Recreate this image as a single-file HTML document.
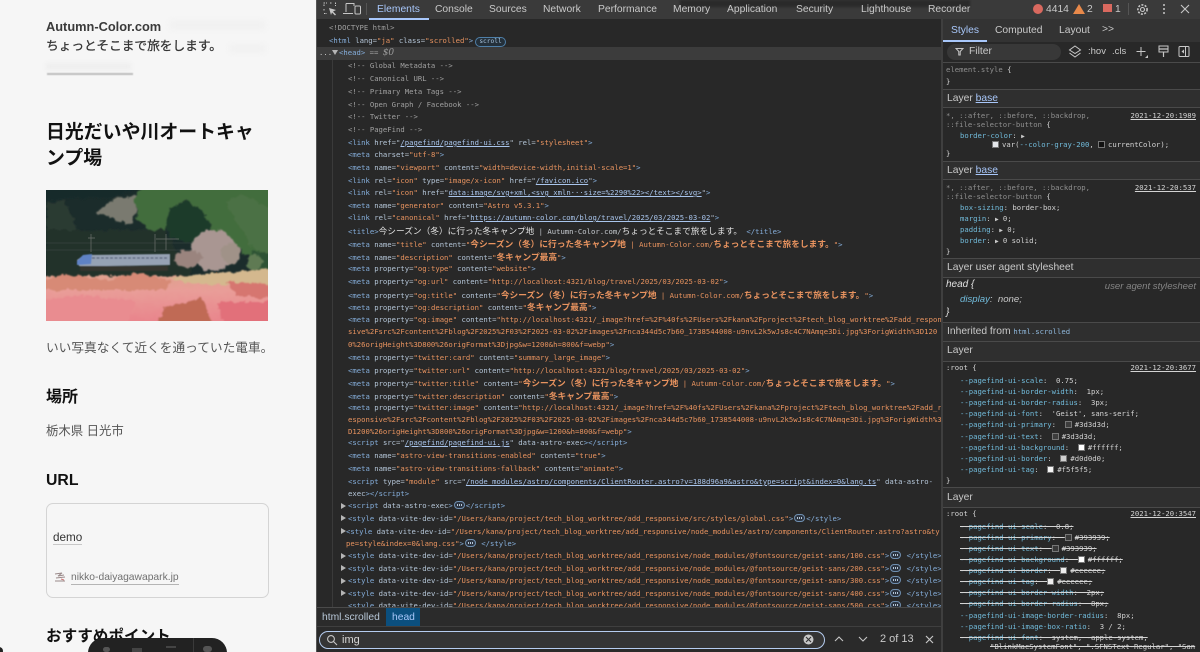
<!DOCTYPE html>
<html lang="ja"><head><meta charset="utf-8"><title>DevTools</title>
<style>
*{box-sizing:border-box}
html,body{margin:0;padding:0;width:1200px;height:652px;overflow:hidden;background:#282828}
body{position:relative;font-family:"Liberation Sans","Noto Sans CJK JP",sans-serif}
.abs,.l,.s,.x{position:absolute;white-space:pre}
#left{position:absolute;left:0;top:0;width:316px;height:652px;background:#f6f6f6;overflow:hidden}
.h{font-weight:700;color:#111}
.l{font:7.25px/12px "DejaVu Sans Mono","Noto Sans CJK JP",monospace;color:#b0bac6;height:12px}
.t{color:#85aedb}.n{color:#b5c6d8}.v{color:#e8935f}.b{color:#c6cacf}.m{color:#a0a0a0}
.u{color:#a9c5ec;text-decoration:underline}
.c{font:bold 8.7px/12px "Noto Sans CJK JP",sans-serif;letter-spacing:0}
.w{font-weight:400;color:#e0e0e0}
.s{font:7.25px/11px "DejaVu Sans Mono","Noto Sans CJK JP",monospace;color:#d4d4d4;height:11px}
.p{color:#72bcdc}.g{color:#909090}
.st{text-decoration:line-through}
.lb{position:absolute;left:943px;width:257px;background:#2f2f2f}
.d{position:absolute;left:943px;width:257px;height:1px;background:#4a4a4a}
.x{font:10.3px/14px "Liberation Sans",sans-serif;color:#c9c9c9}
.sw{display:inline-block;width:7px;height:7px;border:1px solid #777;vertical-align:-1px;margin-right:3px}
.ar{font-size:6px;color:#ccc}
.dot{display:inline-block;width:11px;height:8px;border:1px solid #6f8fb0;border-radius:5px;vertical-align:-1px;background:#2c3440;position:relative;margin:0 1px}
.dot:after{content:"";position:absolute;left:2px;top:2px;width:5px;height:2px;background:repeating-linear-gradient(90deg,#b5c6d8 0 1px,transparent 1px 2px)}
</style></head><body>

<div id="left">
<div class="abs" style="left:170px;top:21px;width:95px;height:8px;background:#f0f0f0;filter:blur(3px)"></div>
<div class="abs" style="left:230px;top:45px;width:35px;height:7px;background:#f0f0f0;filter:blur(3px)"></div>
<div class="abs" style="left:46px;top:63px;width:85px;height:7px;background:#eee;filter:blur(2px)"></div>
<div class="abs" style="left:47px;top:73px;width:86px;height:2px;background:#bdbdbd;filter:blur(.6px)"></div>
<div class="abs" style="left:46px;top:19px;font-size:12.8px;line-height:16px;font-weight:700;color:#3a3a3a">Autumn-Color.com</div>
<div class="abs" style="left:46px;top:37px;font-size:12.7px;line-height:18px;color:#333;-webkit-text-stroke:.25px #333">ちょっとそこまで旅をします。</div>
<div class="abs h" style="left:46px;top:120px;font-size:18.9px;line-height:25.5px">日光だいや川オートキャ<br>ンプ場</div>
<svg class="abs" style="left:46px;top:190px" width="222" height="131" viewBox="0 0 222 131">
<defs>
<filter id="r" x="-5%" y="-5%" width="110%" height="110%"><feTurbulence type="fractalNoise" baseFrequency=".16" numOctaves="3" seed="4" result="n"/><feDisplacementMap in="SourceGraphic" in2="n" scale="7" xChannelSelector="R" yChannelSelector="G"/><feGaussianBlur stdDeviation=".9"/></filter>
<filter id="b2"><feGaussianBlur stdDeviation=".6"/></filter>
<linearGradient id="gr" x1="0" y1="0" x2="0" y2="1"><stop offset="0" stop-color="#dfa08e"/><stop offset=".3" stop-color="#e99d98"/><stop offset="1" stop-color="#e9818a"/></linearGradient>
</defs>
<rect width="222" height="131" fill="#1b2c2b"/>
<g filter="url(#r)">
<path d="M-5-5H95L70 8 30 8-5 12Z" fill="#12292a"/>
<path d="M0 14 18 10 30 35 40 70 0 70Z" fill="#2c3a33"/>
<path d="M50 22 68 9 90 5 89 25 85 35 70 30Z" fill="#7a7a70"/>
<path d="M88 8 100-5H230V85L210 72 195 60 170 50 160 25 140 10 125 18 118 45 105 42 92 30Z" fill="#426d3e"/>
<path d="M124 18 142 10 160 25 168 48 150 55 125 48 120 35Z" fill="#1c3a2c"/>
<path d="M180 12 195 4 228 20 228 75 205 55Z" fill="#4b7144"/>
<path d="M0 40H120L130 62 150 70 140 98H0Z" fill="#20302b"/>
<path d="M205 62H228V88L205 92Z" fill="#2f5236"/>
</g>
<path d="M0 53 150 53M0 60H150" stroke="#4d5350" stroke-width=".4"/>
<path d="M45 44V62M42 48H49M109 44V62M120 44V60M110 49H133" stroke="#6d716d" stroke-width=".7"/>
<g filter="url(#r)"><ellipse cx="167" cy="60" rx="22" ry="21" fill="#a99692"/><ellipse cx="142" cy="69" rx="14" ry="9" fill="#9a847e"/><circle cx="185" cy="64" r="10" fill="#a09288"/><circle cx="208" cy="72" r="8" fill="#5e7a52"/></g>
<path d="M165 88 162 95M171 82 163 96" stroke="#43301f" stroke-width="1.2"/>
<g filter="url(#b2)">
<path d="M31 70 38 65 124 64 124 75 60 76 33 76Z" fill="#96a2b4"/>
<path d="M31 71 37 65 46 64 45 74 31 75Z" fill="#5e82c4"/>
<path d="M46 68H122" stroke="#59627a" stroke-width="1.2" stroke-dasharray="3 1.5"/>
<rect x="34" y="76" width="88" height="5" fill="#34342f"/>
</g>
<g filter="url(#r)">
<rect x="-6" y="86" width="234" height="50" fill="url(#gr)"/>
<path d="M120 88 228 78V96L150 94Z" fill="#d4b88e"/>
<path d="M-5 90 20 84 60 90 95 82 125 92 120 100-5 100Z" fill="#d78a76"/>
<path d="M180 92 228 94V108L190 106Z" fill="#d67670"/>
<path d="M118 118 155 108 168 136H110Z" fill="#c06a55"/>
<path d="M-5 110 40 105 90 112 80 136H-5Z" fill="#e98c90"/>
<path d="M170 112 228 112V136H178Z" fill="#e2707a"/>
</g>
</svg>
<div class="abs" style="left:46px;top:339px;font-size:12.7px;line-height:18px;color:#555">いい写真なくて近くを通っていた電車。</div>
<div class="abs h" style="left:46px;top:388px;font-size:16px;line-height:20px">場所</div>
<div class="abs" style="left:46px;top:422px;font-size:12.4px;line-height:18px;color:#555">栃木県 日光市</div>
<div class="abs h" style="left:46px;top:471px;font-size:15.8px;line-height:20px">URL</div>
<div class="abs" style="left:46px;top:503px;width:223px;height:95px;border:1px solid #d4d4d4;border-radius:7px"></div>
<div class="abs" style="left:53px;top:531px;font-size:11.7px;line-height:13px;color:#333;border-bottom:1px solid #c8c8c8">demo</div>
<svg class="abs" style="left:54px;top:572px" width="12" height="11" viewBox="0 0 12 11"><path d="M1 2 8 1 4 4 10 3M2 6 11 5M1 9H11" stroke="#9a8a8a" stroke-width="1" fill="none"/><path d="M7 7 10 8" stroke="#c77" stroke-width="1"/></svg>
<div class="abs" style="left:71px;top:572px;font-size:10.3px;line-height:12px;color:#707070;border-bottom:1px solid #b5b5b5">nikko-daiyagawapark.jp</div>
<div class="abs h" style="left:46px;top:627px;font-size:15.6px;line-height:20px">おすすめポイント</div>
<div class="abs" style="left:88px;top:638px;width:139px;height:30px;border-radius:15px;background:#222"></div>
<div class="abs" style="left:193px;top:638px;width:1px;height:14px;background:#3a3a3a"></div>
<div class="abs" style="left:103px;top:647px;width:7px;height:5px;border-radius:3px;background:#555"></div>
<div class="abs" style="left:132px;top:648px;width:10px;height:4px;background:#444"></div>
<div class="abs" style="left:166px;top:646px;width:10px;height:2px;background:#444"></div>
<div class="abs" style="left:203px;top:646px;width:9px;height:6px;border-radius:3px;background:#555"></div>
<div class="abs" style="left:-5px;top:647px;width:8px;height:8px;border-radius:50%;background:#222"></div>
</div>
<div class="abs" style="left:316px;top:0;width:1px;height:652px;background:#555"></div>

<!-- top toolbar -->
<div class="abs" style="left:317px;top:0;width:883px;height:19px;background:#3a3a3a"></div>
<div class="abs" style="left:680px;top:0;width:290px;height:7px;background:#2a2a2a;filter:blur(1px)"></div>
<svg class="abs" style="left:323px;top:2px" width="44" height="14" viewBox="0 0 44 14" fill="none" stroke="#c7c7c7"><path d="M1 4V1H4M7 1H9M12 1H12.5V4M1 7V9M1 11.5H4" stroke-dasharray="1.5 1"/><path d="M6 6 13 8 10 9.5 13 12.5 12 13.5 9 10.5 8 13Z" fill="#c7c7c7" stroke="none"/><path d="M23 1.5H31V4M23 1.5V10M20 11.5H30"/><rect x="32" y="4" width="5.5" height="8" rx="1"/></svg>
<div class="abs" style="left:366px;top:3px;width:1px;height:12px;background:#555"></div>
<div class="x" style="left:377px;top:3px;color:#a8c7fa">Elements</div>
<div class="abs" style="left:369px;top:18px;width:60px;height:1.5px;background:#a8c7fa"></div>
<div class="x" style="left:435px;top:3px">Console</div>
<div class="x" style="left:489px;top:3px">Sources</div>
<div class="x" style="left:543px;top:3px">Network</div>
<div class="x" style="left:598px;top:3px">Performance</div>
<div class="x" style="left:673px;top:3px">Memory</div>
<div class="x" style="left:727px;top:3px">Application</div>
<div class="x" style="left:796px;top:3px">Security</div>
<div class="x" style="left:861px;top:3px">Lighthouse</div>
<div class="x" style="left:928px;top:3px">Recorder</div>
<div class="abs" style="left:1033px;top:4px;width:10px;height:10px;border-radius:50%;background:#d9695f"></div>
<div class="x" style="left:1046px;top:3px">4414</div>
<svg class="abs" style="left:1073px;top:4px" width="12" height="10"><path d="M6 0 12 10H0Z" fill="#e8894a"/></svg>
<div class="x" style="left:1087px;top:3px">2</div>
<div class="abs" style="left:1103px;top:4px;width:9px;height:8px;background:#d9695f"></div>
<div class="x" style="left:1115px;top:3px">1</div>
<div class="abs" style="left:1128px;top:3px;width:1px;height:12px;background:#555"></div>
<svg class="abs" style="left:1136px;top:3px" width="13" height="13" viewBox="0 0 13 13" fill="none" stroke="#c7c7c7" stroke-width="1.1"><circle cx="6.5" cy="6.5" r="2"/><circle cx="6.5" cy="6.5" r="4.6" stroke-width="1.6" stroke-dasharray="2 1.4"/></svg>
<svg class="abs" style="left:1162px;top:3px" width="4" height="12"><circle cx="2" cy="2" r="1" fill="#c7c7c7"/><circle cx="2" cy="6" r="1" fill="#c7c7c7"/><circle cx="2" cy="10" r="1" fill="#c7c7c7"/></svg>
<svg class="abs" style="left:1180px;top:4px" width="10" height="10" stroke="#c7c7c7" stroke-width="1.1"><path d="M1 1 9 9M9 1 1 9"/></svg>

<!-- elements -->
<div class="abs" style="left:317px;top:47px;width:625px;height:13px;background:#3c3c3c"></div>
<div class="abs" style="left:332px;top:60px;width:1px;height:548px;background:#3a3a3a"></div>
<div class="l m" style="left:329px;top:22px">&lt;!DOCTYPE html&gt;</div>
<div class="l" style="left:329px;top:35px"><span class="t">&lt;html</span> <span class="n">lang</span>=<span class="v">"ja"</span> <span class="n">class</span>=<span class="v">"scrolled"</span><span class="t">&gt;</span></div>
<div class="abs" style="left:475px;top:37px;width:31px;height:10px;border:1px solid #4f7fa8;border-radius:5px;background:#24303a;font:6.2px/8px 'DejaVu Sans Mono',monospace;color:#a9c4de;text-align:center">scroll</div>
<div class="l" style="left:319px;top:47px;color:#ccc">...</div>
<svg class="abs" style="left:332px;top:50px" width="6" height="5"><path d="M0 0H6L3 5Z" fill="#b5b5b5"/></svg>
<div class="l" style="left:339px;top:47px"><span class="t">&lt;head&gt;</span> <span class="m">==</span> <i style="color:#9a9a9a;font:italic 9px/12px 'DejaVu Serif',serif">$0</i></div>
<div class="l m" style="left:348px;top:60px">&lt;!-- Global Metadata --&gt;</div>
<div class="l m" style="left:348px;top:73px">&lt;!-- Canonical URL --&gt;</div>
<div class="l m" style="left:348px;top:86px">&lt;!-- Primary Meta Tags --&gt;</div>
<div class="l m" style="left:348px;top:99px">&lt;!-- Open Graph / Facebook --&gt;</div>
<div class="l m" style="left:348px;top:111px">&lt;!-- Twitter --&gt;</div>
<div class="l m" style="left:348px;top:124px">&lt;!-- PageFind --&gt;</div>
<div class="l" style="left:348px;top:137px"><span class="t">&lt;link</span> <span class="n">href</span>="<span class="u">/pagefind/pagefind-ui.css</span>" <span class="n">rel</span>=<span class="v">"stylesheet"</span><span class="t">&gt;</span></div>
<div class="l" style="left:348px;top:149px"><span class="t">&lt;meta</span> <span class="n">charset</span>=<span class="v">"utf-8"</span><span class="t">&gt;</span></div>
<div class="l" style="left:348px;top:162px"><span class="t">&lt;meta</span> <span class="n">name</span>=<span class="v">"viewport"</span> <span class="n">content</span>=<span class="v">"width=device-width,initial-scale=1"</span><span class="t">&gt;</span></div>
<div class="l" style="left:348px;top:175px"><span class="t">&lt;link</span> <span class="n">rel</span>=<span class="v">"icon"</span> <span class="n">type</span>=<span class="v">"image/x-icon"</span> <span class="n">href</span>="<span class="u">/favicon.ico</span>"<span class="t">&gt;</span></div>
<div class="l" style="left:348px;top:187px"><span class="t">&lt;link</span> <span class="n">rel</span>=<span class="v">"icon"</span> <span class="n">href</span>="<span class="u">data:image/svg+xml,&lt;svg xmln···size=%2290%22&gt;&lt;/text&gt;&lt;/svg&gt;</span>"<span class="t">&gt;</span></div>
<div class="l" style="left:348px;top:200px"><span class="t">&lt;meta</span> <span class="n">name</span>=<span class="v">"generator"</span> <span class="n">content</span>=<span class="v">"Astro v5.3.1"</span><span class="t">&gt;</span></div>
<div class="l" style="left:348px;top:212px"><span class="t">&lt;link</span> <span class="n">rel</span>=<span class="v">"canonical"</span> <span class="n">href</span>="<span class="u">https://autumn-color.com/blog/travel/2025/03/2025-03-02</span>"<span class="t">&gt;</span></div>
<div class="l" style="left:348px;top:225px"><span class="t">&lt;title&gt;</span><span class="b"><span class="c w">今シーズン（冬）に行った冬キャンプ地</span> | Autumn-Color.com/<span class="c w">ちょっとそこまで旅をします。</span></span><span class="t"> &lt;/title&gt;</span></div>
<div class="l" style="left:348px;top:238px"><span class="t">&lt;meta</span> <span class="n">name</span>=<span class="v">"title"</span> <span class="n">content</span>=<span class="v">"<span class="c">今シーズン（冬）に行った冬キャンプ地</span> | Autumn-Color.com/<span class="c">ちょっとそこまで旅をします。</span>"</span><span class="t">&gt;</span></div>
<div class="l" style="left:348px;top:251px"><span class="t">&lt;meta</span> <span class="n">name</span>=<span class="v">"description"</span> <span class="n">content</span>=<span class="v">"<span class="c">冬キャンプ最高</span>"</span><span class="t">&gt;</span></div>
<div class="l" style="left:348px;top:263px"><span class="t">&lt;meta</span> <span class="n">property</span>=<span class="v">"og:type"</span> <span class="n">content</span>=<span class="v">"website"</span><span class="t">&gt;</span></div>
<div class="l" style="left:348px;top:276px"><span class="t">&lt;meta</span> <span class="n">property</span>=<span class="v">"og:url"</span> <span class="n">content</span>=<span class="v">"http://localhost:4321/blog/travel/2025/03/2025-03-02"</span><span class="t">&gt;</span></div>
<div class="l" style="left:348px;top:289px"><span class="t">&lt;meta</span> <span class="n">property</span>=<span class="v">"og:title"</span> <span class="n">content</span>=<span class="v">"<span class="c">今シーズン（冬）に行った冬キャンプ地</span> | Autumn-Color.com/<span class="c">ちょっとそこまで旅をします。</span>"</span><span class="t">&gt;</span></div>
<div class="l" style="left:348px;top:301px"><span class="t">&lt;meta</span> <span class="n">property</span>=<span class="v">"og:description"</span> <span class="n">content</span>=<span class="v">"<span class="c">冬キャンプ最高</span>"</span><span class="t">&gt;</span></div>
<div class="l" style="left:348px;top:314px"><span class="t">&lt;meta</span> <span class="n">property</span>=<span class="v">"og:image"</span> <span class="n">content</span>=<span class="v">"http://localhost:4321/_image?href=%2F%40fs%2FUsers%2Fkana%2Fproject%2Ftech_blog_worktree%2Fadd_respon</span></div>
<div class="l" style="left:348px;top:326px"><span class="v">sive%2Fsrc%2Fcontent%2Fblog%2F2025%2F03%2F2025-03-02%2Fimages%2Fnca344d5c7b60_1738544008-u9nvL2k5wJs8c4C7NAmqe3Di.jpg%3ForigWidth%3D120</span></div>
<div class="l" style="left:348px;top:339px"><span class="v">0%26origHeight%3D800%26origFormat%3Djpg&amp;w=1200&amp;h=800&amp;f=webp"</span><span class="t">&gt;</span></div>
<div class="l" style="left:348px;top:352px"><span class="t">&lt;meta</span> <span class="n">property</span>=<span class="v">"twitter:card"</span> <span class="n">content</span>=<span class="v">"summary_large_image"</span><span class="t">&gt;</span></div>
<div class="l" style="left:348px;top:365px"><span class="t">&lt;meta</span> <span class="n">property</span>=<span class="v">"twitter:url"</span> <span class="n">content</span>=<span class="v">"http://localhost:4321/blog/travel/2025/03/2025-03-02"</span><span class="t">&gt;</span></div>
<div class="l" style="left:348px;top:377px"><span class="t">&lt;meta</span> <span class="n">property</span>=<span class="v">"twitter:title"</span> <span class="n">content</span>=<span class="v">"<span class="c">今シーズン（冬）に行った冬キャンプ地</span> | Autumn-Color.com/<span class="c">ちょっとそこまで旅をします。</span>"</span><span class="t">&gt;</span></div>
<div class="l" style="left:348px;top:390px"><span class="t">&lt;meta</span> <span class="n">property</span>=<span class="v">"twitter:description"</span> <span class="n">content</span>=<span class="v">"<span class="c">冬キャンプ最高</span>"</span><span class="t">&gt;</span></div>
<div class="l" style="left:348px;top:402px"><span class="t">&lt;meta</span> <span class="n">property</span>=<span class="v">"twitter:image"</span> <span class="n">content</span>=<span class="v">"http://localhost:4321/_image?href=%2F%40fs%2FUsers%2Fkana%2Fproject%2Ftech_blog_worktree%2Fadd_r</span></div>
<div class="l" style="left:348px;top:414px"><span class="v">esponsive%2Fsrc%2Fcontent%2Fblog%2F2025%2F03%2F2025-03-02%2Fimages%2Fnca344d5c7b60_1738544008-u9nvL2k5wJs8c4C7NAmqe3Di.jpg%3ForigWidth%3</span></div>
<div class="l" style="left:348px;top:426px"><span class="v">D1200%26origHeight%3D800%26origFormat%3Djpg&amp;w=1200&amp;h=800&amp;f=webp"</span><span class="t">&gt;</span></div>
<div class="l" style="left:348px;top:437px"><span class="t">&lt;script</span> <span class="n">src</span>="<span class="u">/pagefind/pagefind-ui.js</span>" <span class="n">data-astro-exec</span><span class="t">&gt;&lt;/script&gt;</span></div>
<div class="l" style="left:348px;top:450px"><span class="t">&lt;meta</span> <span class="n">name</span>=<span class="v">"astro-view-transitions-enabled"</span> <span class="n">content</span>=<span class="v">"true"</span><span class="t">&gt;</span></div>
<div class="l" style="left:348px;top:463px"><span class="t">&lt;meta</span> <span class="n">name</span>=<span class="v">"astro-view-transitions-fallback"</span> <span class="n">content</span>=<span class="v">"animate"</span><span class="t">&gt;</span></div>
<div class="l" style="left:348px;top:476px"><span class="t">&lt;script</span> <span class="n">type</span>=<span class="v">"module"</span> <span class="n">src</span>="<span class="u">/node_modules/astro/components/ClientRouter.astro?v=188d96a9&amp;astro&amp;type=script&amp;index=0&amp;lang.ts</span>" <span class="n">data-astro-</span></div>
<div class="l" style="left:348px;top:488px"><span class="n">exec</span><span class="t">&gt;&lt;/script&gt;</span></div>
<svg class="abs" style="left:341px;top:503px" width="5" height="108" fill="#b5b5b5"><path d="M0 0 5 3 0 6ZM0 12 5 15 0 18ZM0 25 5 28 0 31ZM0 50 5 53 0 56ZM0 62 5 65 0 68ZM0 75 5 78 0 81ZM0 87 5 90 0 93Z"/></svg>
<div class="l" style="left:348px;top:500px"><span class="t">&lt;script</span> <span class="n">data-astro-exec</span><span class="t">&gt;</span><span class="dot"></span><span class="t">&lt;/script&gt;</span></div>
<div class="l" style="left:348px;top:513px"><span class="t">&lt;style</span> <span class="n">data-vite-dev-id</span>=<span class="v">"/Users/kana/project/tech_blog_worktree/add_responsive/src/styles/global.css"</span><span class="t">&gt;</span><span class="dot"></span><span class="t">&lt;/style&gt;</span></div>
<div class="l" style="left:346px;top:526px"><span class="t">&lt;style</span> <span class="n">data-vite-dev-id</span>=<span class="v">"/Users/kana/project/tech_blog_worktree/add_responsive/node_modules/astro/components/ClientRouter.astro?astro&amp;ty</span></div>
<div class="l" style="left:346px;top:538px"><span class="v">pe=style&amp;index=0&amp;lang.css"</span><span class="t">&gt;</span><span class="dot"></span><span class="t"> &lt;/style&gt;</span></div>
<div class="l" style="left:348px;top:550px"><span class="t">&lt;style</span> <span class="n">data-vite-dev-id</span>=<span class="v">"/Users/kana/project/tech_blog_worktree/add_responsive/node_modules/@fontsource/geist-sans/100.css"</span><span class="t">&gt;</span><span class="dot"></span><span class="t"> &lt;/style&gt;</span></div>
<div class="l" style="left:348px;top:563px"><span class="t">&lt;style</span> <span class="n">data-vite-dev-id</span>=<span class="v">"/Users/kana/project/tech_blog_worktree/add_responsive/node_modules/@fontsource/geist-sans/200.css"</span><span class="t">&gt;</span><span class="dot"></span><span class="t"> &lt;/style&gt;</span></div>
<div class="l" style="left:348px;top:575px"><span class="t">&lt;style</span> <span class="n">data-vite-dev-id</span>=<span class="v">"/Users/kana/project/tech_blog_worktree/add_responsive/node_modules/@fontsource/geist-sans/300.css"</span><span class="t">&gt;</span><span class="dot"></span><span class="t"> &lt;/style&gt;</span></div>
<div class="l" style="left:348px;top:588px"><span class="t">&lt;style</span> <span class="n">data-vite-dev-id</span>=<span class="v">"/Users/kana/project/tech_blog_worktree/add_responsive/node_modules/@fontsource/geist-sans/400.css"</span><span class="t">&gt;</span><span class="dot"></span><span class="t"> &lt;/style&gt;</span></div>
<div class="l" style="left:348px;top:600px"><span class="t">&lt;style</span> <span class="n">data-vite-dev-id</span>=<span class="v">"/Users/kana/project/tech_blog_worktree/add_responsive/node_modules/@fontsource/geist-sans/500.css"</span><span class="t">&gt;</span><span class="dot"></span><span class="t"> &lt;/style&gt;</span></div>

<!-- breadcrumb + search -->
<div class="abs" style="left:317px;top:607px;width:625px;height:19px;background:#2b2b2b;border-top:1px solid #4a4a4a"></div>
<div class="x" style="left:322px;top:611px;color:#b8c8d8">html.scrolled</div>
<div class="abs" style="left:386px;top:608px;width:34px;height:18px;background:#0b4f7e"></div>
<div class="x" style="left:392px;top:611px;color:#a8c7fa">head</div>
<div class="abs" style="left:317px;top:626px;width:625px;height:26px;background:#2a2a2a;border-top:1px solid #3f3f3f"></div>
<div class="abs" style="left:319px;top:631px;width:506px;height:18px;border:1.5px solid #b6cdf0;border-radius:9px;background:#353535"></div>
<svg class="abs" style="left:326px;top:634px" width="12" height="12" fill="none" stroke="#c7c7c7" stroke-width="1.1"><circle cx="5" cy="5" r="3.4"/><path d="M7.5 7.5 11 11"/></svg>
<div class="abs" style="left:342px;top:632px;font:11px/16px 'Liberation Sans',sans-serif;color:#d8d8d8">img</div>
<svg class="abs" style="left:803px;top:634px" width="11" height="11"><circle cx="5.5" cy="5.5" r="5" fill="#c7c7c7"/><path d="M3 3 8 8M8 3 3 8" stroke="#333" stroke-width="1.1"/></svg>
<svg class="abs" style="left:834px;top:635px" width="36" height="8" fill="none" stroke="#c7c7c7" stroke-width="1.1"><path d="M1 6 5 2 9 6M25 2 29 6 33 2"/></svg>
<div class="x" style="left:880px;top:632px;font-size:11px">2 of 13</div>
<svg class="abs" style="left:925px;top:635px" width="9" height="9" stroke="#c7c7c7" stroke-width="1.2"><path d="M1 1 8 8M8 1 1 8"/></svg>

<!-- styles pane -->
<div class="abs" style="left:941px;top:19px;width:2px;height:633px;background:#3f3f3f"></div>
<div class="abs" style="left:943px;top:19px;width:257px;height:23px;background:#333"></div>
<div class="x" style="left:951px;top:24px;color:#a8c7fa">Styles</div>
<div class="abs" style="left:943px;top:40px;width:44px;height:1.5px;background:#a8c7fa"></div>
<div class="x" style="left:995px;top:24px">Computed</div>
<div class="x" style="left:1059px;top:24px">Layout</div>
<div class="x" style="left:1102px;top:23px">&gt;&gt;</div>
<div class="abs" style="left:943px;top:42px;width:257px;height:20px;background:#282828"></div>
<div class="abs" style="left:947px;top:44px;width:114px;height:16px;border-radius:8px;background:#383838"></div>
<svg class="abs" style="left:955px;top:47px" width="9" height="9" fill="none" stroke="#c7c7c7"><path d="M1 1.5H8L5.2 4.5V8H3.8V4.5Z"/></svg>
<div class="x" style="left:969px;top:45px">Filter</div>
<svg class="abs" style="left:1068px;top:45px" width="14" height="13" fill="none" stroke="#c7c7c7"><path d="M7 1 12.5 5 7 8.5 1.5 5ZM1.5 8 7 12 12.5 8"/></svg>
<div class="x" style="left:1088px;top:45px;font-size:9.5px">:hov</div>
<div class="x" style="left:1112px;top:45px;font-size:9.5px">.cls</div>
<svg class="abs" style="left:1136px;top:46px" width="13" height="13" stroke="#c7c7c7" fill="none"><path d="M5 1V10M0.5 5.5H9.5"/><path d="M9 12 12 12 12 9Z" fill="#c7c7c7" stroke="none"/></svg>
<svg class="abs" style="left:1158px;top:45px" width="11" height="14" fill="none" stroke="#c7c7c7"><rect x="1" y="1" width="9" height="6"/><path d="M1 4H10M5.5 7V12" stroke-width="1.2"/></svg>
<svg class="abs" style="left:1178px;top:45px" width="13" height="13" fill="none" stroke="#c7c7c7"><rect x="1" y="1.5" width="10" height="10" rx="1"/><path d="M7.5 1.5V11.5"/><path d="M6 4.5 3.5 6.5 6 8.5Z" fill="#c7c7c7" stroke="none"/></svg>
<div class="d" style="top:62px"></div>

<div class="s g" style="left:946px;top:64px">element.style <span style="color:#d4d4d4">{</span></div>
<div class="s" style="left:946px;top:76px">}</div>
<div class="lb" style="top:89px;height:19px;border-top:1px solid #4a4a4a;border-bottom:1px solid #4a4a4a"></div>
<div class="x" style="left:947px;top:92px">Layer <span style="color:#a8c7fa;text-decoration:underline">base</span></div>
<div class="s g" style="left:946px;top:110px">*, ::after, ::before, ::backdrop,</div>
<div class="s u" style="right:4px;top:110px;color:#d4d4d4">2021-12-20:1989</div>
<div class="s g" style="left:946px;top:119px">::file-selector-button <span style="color:#d4d4d4">{</span></div>
<div class="s" style="left:960px;top:130px"><span class="p">border-color</span>: <span class="ar">▶</span></div>
<div class="s" style="left:992px;top:139px"><span class="sw" style="background:#e5e7eb"></span>var(<span class="p">--color-gray-200</span>, <span class="sw" style="background:#111"></span>currentColor);</div>
<div class="s" style="left:946px;top:148px">}</div>
<div class="lb" style="top:161px;height:19px;border-top:1px solid #4a4a4a;border-bottom:1px solid #4a4a4a"></div>
<div class="x" style="left:947px;top:164px">Layer <span style="color:#a8c7fa;text-decoration:underline">base</span></div>
<div class="s g" style="left:946px;top:182px">*, ::after, ::before, ::backdrop,</div>
<div class="s u" style="right:4px;top:182px;color:#d4d4d4">2021-12-20:537</div>
<div class="s g" style="left:946px;top:191px">::file-selector-button <span style="color:#d4d4d4">{</span></div>
<div class="s" style="left:960px;top:202px"><span class="p">box-sizing</span>: border-box;</div>
<div class="s" style="left:960px;top:213px"><span class="p">margin</span>: <span class="ar">▶</span> 0;</div>
<div class="s" style="left:960px;top:224px"><span class="p">padding</span>: <span class="ar">▶</span> 0;</div>
<div class="s" style="left:960px;top:235px"><span class="p">border</span>: <span class="ar">▶</span> 0 solid;</div>
<div class="s" style="left:946px;top:246px">}</div>
<div class="lb" style="top:258px;height:20px;border-top:1px solid #4a4a4a;border-bottom:1px solid #4a4a4a"></div>
<div class="x" style="left:947px;top:261px">Layer user agent stylesheet</div>
<div class="x" style="left:946px;top:278px;font-style:italic;color:#e0e0e0;font-size:10px">head {</div>
<div class="x" style="right:4px;top:280px;font-style:italic;color:#858585;font-size:9.6px">user agent stylesheet</div>
<div class="x" style="left:960px;top:293px;font-style:italic;font-size:9.6px"><span class="p">display</span>:&nbsp;&nbsp;none;</div>
<div class="x" style="left:946px;top:306px;font-style:italic;color:#e0e0e0;font-size:10px">}</div>
<div class="lb" style="top:322px;height:20px;border-top:1px solid #4a4a4a;border-bottom:1px solid #4a4a4a"></div>
<div class="x" style="left:947px;top:325px">Inherited from <span style="font:7.25px/14px 'DejaVu Sans Mono',monospace;color:#8fb8dc">html.scrolled</span></div>
<div class="lb" style="top:342px;height:20px;border-bottom:1px solid #4a4a4a"></div>
<div class="x" style="left:947px;top:344px">Layer</div>
<div class="s" style="left:946px;top:362px">:root {</div>
<div class="s u" style="right:4px;top:362px;color:#d4d4d4">2021-12-20:3677</div>
<div class="s" style="left:960px;top:375px"><span class="p">--pagefind-ui-scale</span>:  0.75;</div>
<div class="s" style="left:960px;top:386px"><span class="p">--pagefind-ui-border-width</span>:  1px;</div>
<div class="s" style="left:960px;top:397px"><span class="p">--pagefind-ui-border-radius</span>:  3px;</div>
<div class="s" style="left:960px;top:408px"><span class="p">--pagefind-ui-font</span>:  'Geist', sans-serif;</div>
<div class="s" style="left:960px;top:419px"><span class="p">--pagefind-ui-primary</span>:  <span class="sw" style="background:#3d3d3d"></span>#3d3d3d;</div>
<div class="s" style="left:960px;top:431px"><span class="p">--pagefind-ui-text</span>:  <span class="sw" style="background:#3d3d3d"></span>#3d3d3d;</div>
<div class="s" style="left:960px;top:442px"><span class="p">--pagefind-ui-background</span>:  <span class="sw" style="background:#fff"></span>#ffffff;</div>
<div class="s" style="left:960px;top:453px"><span class="p">--pagefind-ui-border</span>:  <span class="sw" style="background:#d0d0d0"></span>#d0d0d0;</div>
<div class="s" style="left:960px;top:464px"><span class="p">--pagefind-ui-tag</span>:  <span class="sw" style="background:#f5f5f5"></span>#f5f5f5;</div>
<div class="s" style="left:946px;top:475px">}</div>
<div class="lb" style="top:487px;height:21px;border-top:1px solid #4a4a4a;border-bottom:1px solid #4a4a4a"></div>
<div class="x" style="left:947px;top:491px">Layer</div>
<div class="s" style="left:946px;top:508px">:root {</div>
<div class="s u" style="right:4px;top:508px;color:#d4d4d4">2021-12-20:3547</div>
<div class="s st" style="left:960px;top:521px"><span class="p">--pagefind-ui-scale</span>:  0.8;</div>
<div class="s st" style="left:960px;top:532px"><span class="p">--pagefind-ui-primary</span>:  <span class="sw" style="background:#393939"></span>#393939;</div>
<div class="s st" style="left:960px;top:543px"><span class="p">--pagefind-ui-text</span>:  <span class="sw" style="background:#393939"></span>#393939;</div>
<div class="s st" style="left:960px;top:554px"><span class="p">--pagefind-ui-background</span>:  <span class="sw" style="background:#fff"></span>#ffffff;</div>
<div class="s st" style="left:960px;top:565px"><span class="p">--pagefind-ui-border</span>:  <span class="sw" style="background:#eee"></span>#eeeeee;</div>
<div class="s st" style="left:960px;top:576px"><span class="p">--pagefind-ui-tag</span>:  <span class="sw" style="background:#eee"></span>#eeeeee;</div>
<div class="s st" style="left:960px;top:587px"><span class="p">--pagefind-ui-border-width</span>:  2px;</div>
<div class="s st" style="left:960px;top:598px"><span class="p">--pagefind-ui-border-radius</span>:  8px;</div>
<div class="s" style="left:960px;top:610px"><span class="p">--pagefind-ui-image-border-radius</span>:  8px;</div>
<div class="s" style="left:960px;top:621px"><span class="p">--pagefind-ui-image-box-ratio</span>:  3 / 2;</div>
<div class="s st" style="left:960px;top:632px"><span class="p">--pagefind-ui-font</span>:  system, -apple-system,</div>
<div class="s st" style="left:990px;top:641px">"BlinkMacSystemFont", ".SFNSText-Regular", "San</div>
</body></html>
